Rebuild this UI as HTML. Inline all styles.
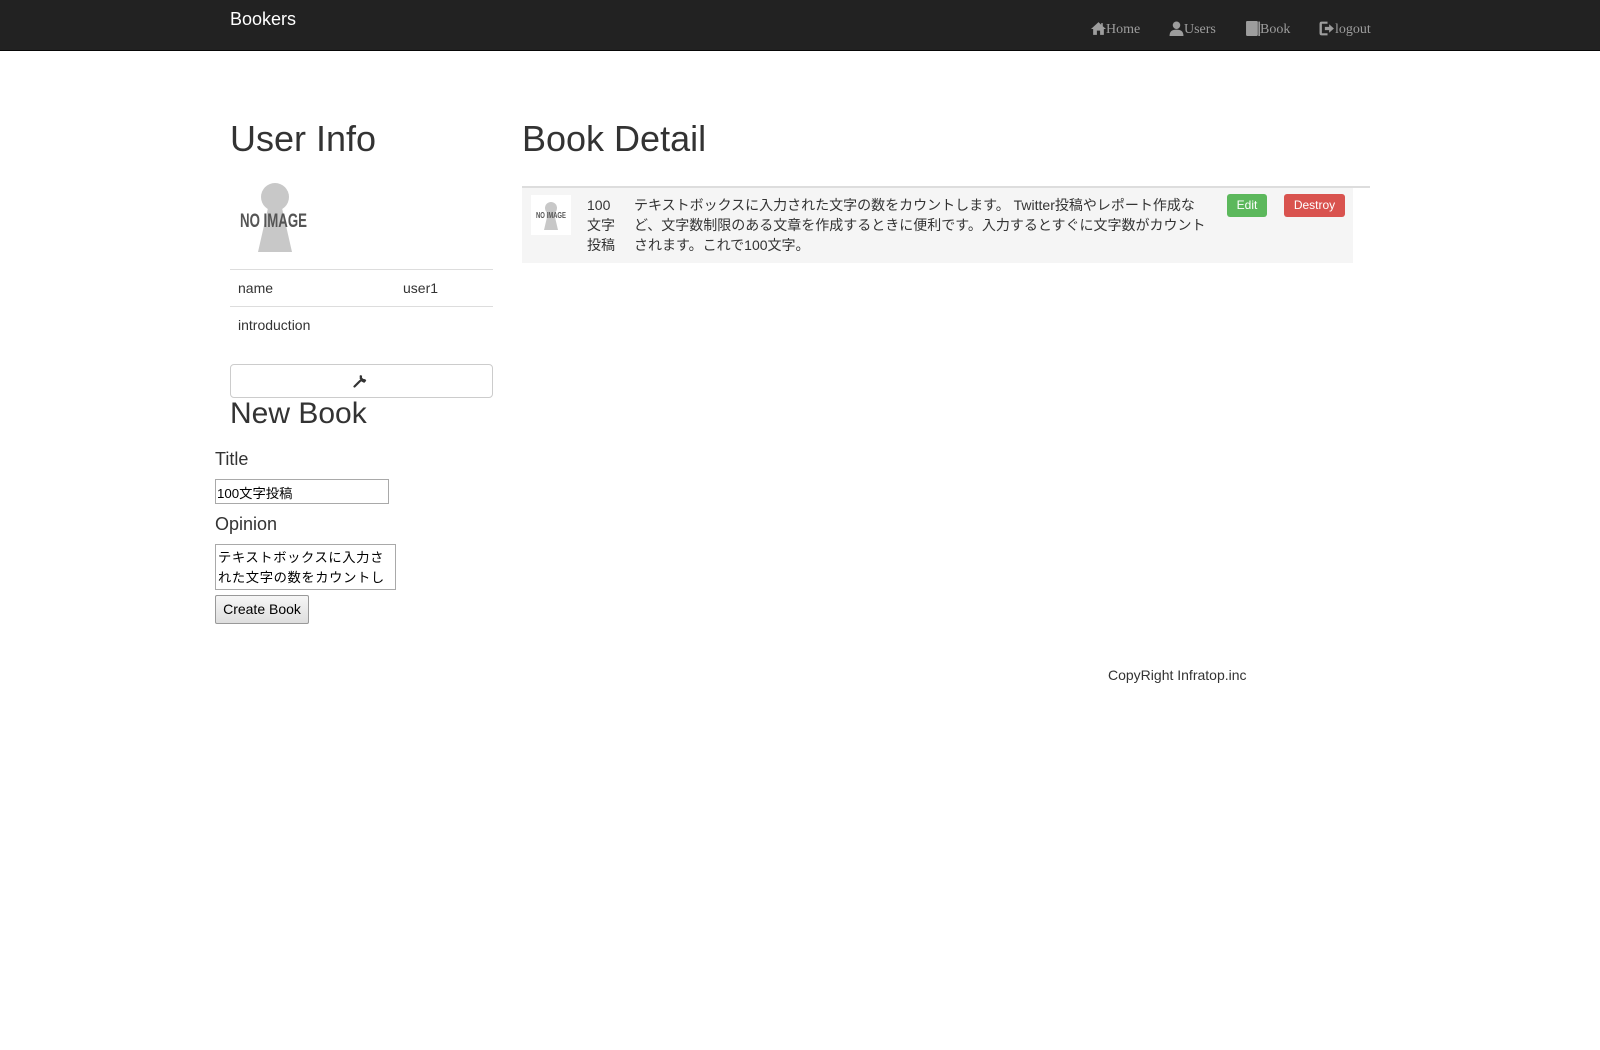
<!DOCTYPE html>
<html><head><meta charset="utf-8"><style>
*{box-sizing:border-box;margin:0;padding:0}
body{width:1600px;height:1050px;background:#fff;font-family:"Liberation Sans","Noto Sans CJK JP",sans-serif;font-size:14px;color:#333;position:relative;overflow:hidden}
.a{position:absolute;white-space:nowrap}
.nav{position:absolute;left:0;top:0;width:1600px;height:51px;background:#222;border-bottom:1px solid #080808}
.nl{position:absolute;top:21px;font-family:"Liberation Serif",serif;font-size:14px;color:#9d9d9d;display:flex;align-items:flex-end;line-height:18px}
.nl svg{margin-right:0px;margin-bottom:3px}
h1{position:absolute;font-size:36px;font-weight:500;line-height:40px;white-space:nowrap}
.btn{position:absolute;color:#fff;font-size:12px;text-align:center;line-height:23px;border-radius:3px}
</style></head><body>
<div class="nav">
<div class="a" style="left:230px;top:9px;font-size:18px;color:#fff;line-height:20px">Bookers</div>
<div class="nl" style="left:1091px"><svg width="15" height="15" viewBox="0 0 14 14"><path d="M7 1L0 7.5h2V13h3.5V9h3v4H12V7.5h2L11 4.9V2H9.5v1.5z" fill="#9d9d9d"/></svg>Home</div>
<div class="nl" style="left:1169px"><svg width="15" height="15" viewBox="0 0 14 14"><circle cx="7" cy="4" r="3.5" fill="#9d9d9d"/><path d="M0.5 14c0-4.5 2.5-6 6.5-6s6.5 1.5 6.5 6z" fill="#9d9d9d"/></svg>Users</div>
<div class="nl" style="left:1246px"><svg width="14" height="15" viewBox="0 0 13 14"><rect x="0" y="0" width="11" height="14" rx="1" fill="#9d9d9d"/><rect x="11.5" y="0.5" width="1.5" height="13.5" fill="#9d9d9d"/></svg>Book</div>
<div class="nl" style="left:1319px"><svg width="16" height="15" viewBox="0 0 15 14"><path d="M8 0.5H2.5Q0.5 0.5 0.5 2.5v9q0 2 2 2H8v-2H2.7V2.5H8z" fill="#9d9d9d"/><path d="M5.5 5.5h4V3l4.5 4-4.5 4V8.5h-4z" fill="#9d9d9d"/></svg>logout</div>
</div>

<h1 style="left:230px;top:119px">User Info</h1>
<h1 style="left:522px;top:119px">Book Detail</h1>

<svg class="a" style="left:230px;top:168px" width="82" height="100" viewBox="0 0 82 100">
<circle cx="45" cy="29" r="14" fill="#c8c8c8"/>
<path d="M38 40h14l10 44H28z" fill="#c8c8c8"/>
<text x="10" y="59" font-family="Liberation Sans Narrow, Liberation Sans" font-weight="bold" font-size="19" fill="#555" textLength="67" lengthAdjust="spacingAndGlyphs">NO IMAGE</text>
</svg>

<div class="a" style="left:230px;top:269px;width:263px;border-top:1px solid #ddd"></div>
<div class="a" style="left:238px;top:280px">name</div>
<div class="a" style="left:403px;top:280px">user1</div>
<div class="a" style="left:230px;top:306px;width:263px;border-top:1px solid #ddd"></div>
<div class="a" style="left:238px;top:317px">introduction</div>

<div class="a" style="left:230px;top:364px;width:263px;height:34px;border:1px solid #ccc;border-radius:4px"></div>
<svg class="a" style="left:353px;top:374px" width="14" height="14" viewBox="0 0 14 14"><path d="M1.5 12.5L7 7M8 1.5a3.5 3.5 0 0 0 4.5 4.5L11 7.5 9 6.5 7.8 4.5z" stroke="#333" stroke-width="2.2" fill="#333" stroke-linecap="round"/></svg>

<h1 style="left:230px;top:394px;font-size:30px">New Book</h1>

<div class="a" style="left:215px;top:449px;font-size:18px">Title</div>
<div class="a" style="left:215px;top:479px;width:174px;height:25px;border:1px solid #a9a9a9;font-size:13.3px;padding:3px 1px;color:#000">100文字投稿</div>
<div class="a" style="left:215px;top:514px;font-size:18px">Opinion</div>
<div class="a" style="left:215px;top:544px;width:181px;height:46px;border:1px solid #a9a9a9;font-size:13.3px;padding:3px 2px;color:#000;line-height:20px;white-space:normal;overflow:hidden;letter-spacing:0.6px">テキストボックスに入力された文字の数をカウントし</div>
<div class="a" style="left:215px;top:595px;width:94px;height:29px;border:1px solid #999;border-radius:2px;background:linear-gradient(#f6f6f6,#dedede);font-size:14px;text-align:center;line-height:27px;color:#000">Create Book</div>

<div class="a" style="left:522px;top:186px;width:848px;border-top:2px solid #ddd"></div>
<div class="a" style="left:522px;top:188px;width:831px;height:75px;background:#f5f5f5"></div>
<svg class="a" style="left:531px;top:195px;background:#fff" width="40" height="40" viewBox="0 0 40 40">
<circle cx="20" cy="13" r="6" fill="#c8c8c8"/><path d="M17 18h6l4 17H13z" fill="#c8c8c8"/>
<text x="5" y="23" font-family="Liberation Sans Narrow, Liberation Sans" font-weight="bold" font-size="8" fill="#555" textLength="30" lengthAdjust="spacingAndGlyphs">NO IMAGE</text></svg>
<div class="a" style="left:587px;top:195px;line-height:20px;font-size:14px">100<br>文字<br>投稿</div>
<div class="a" style="left:634px;top:195px;line-height:20px;font-size:14px;white-space:normal;width:578px">テキストボックスに入力された文字の数をカウントします。 Twitter投稿やレポート作成など、文字数制限のある文章を作成するときに便利です。入力するとすぐに文字数がカウントされます。これで100文字。</div>
<div class="btn" style="left:1227px;top:194px;width:40px;background:#5cb85c">Edit</div>
<div class="btn" style="left:1284px;top:194px;width:61px;background:#d9534f">Destroy</div>

<div class="a" style="left:1108px;top:667px">CopyRight Infratop.inc</div>
</body></html>
